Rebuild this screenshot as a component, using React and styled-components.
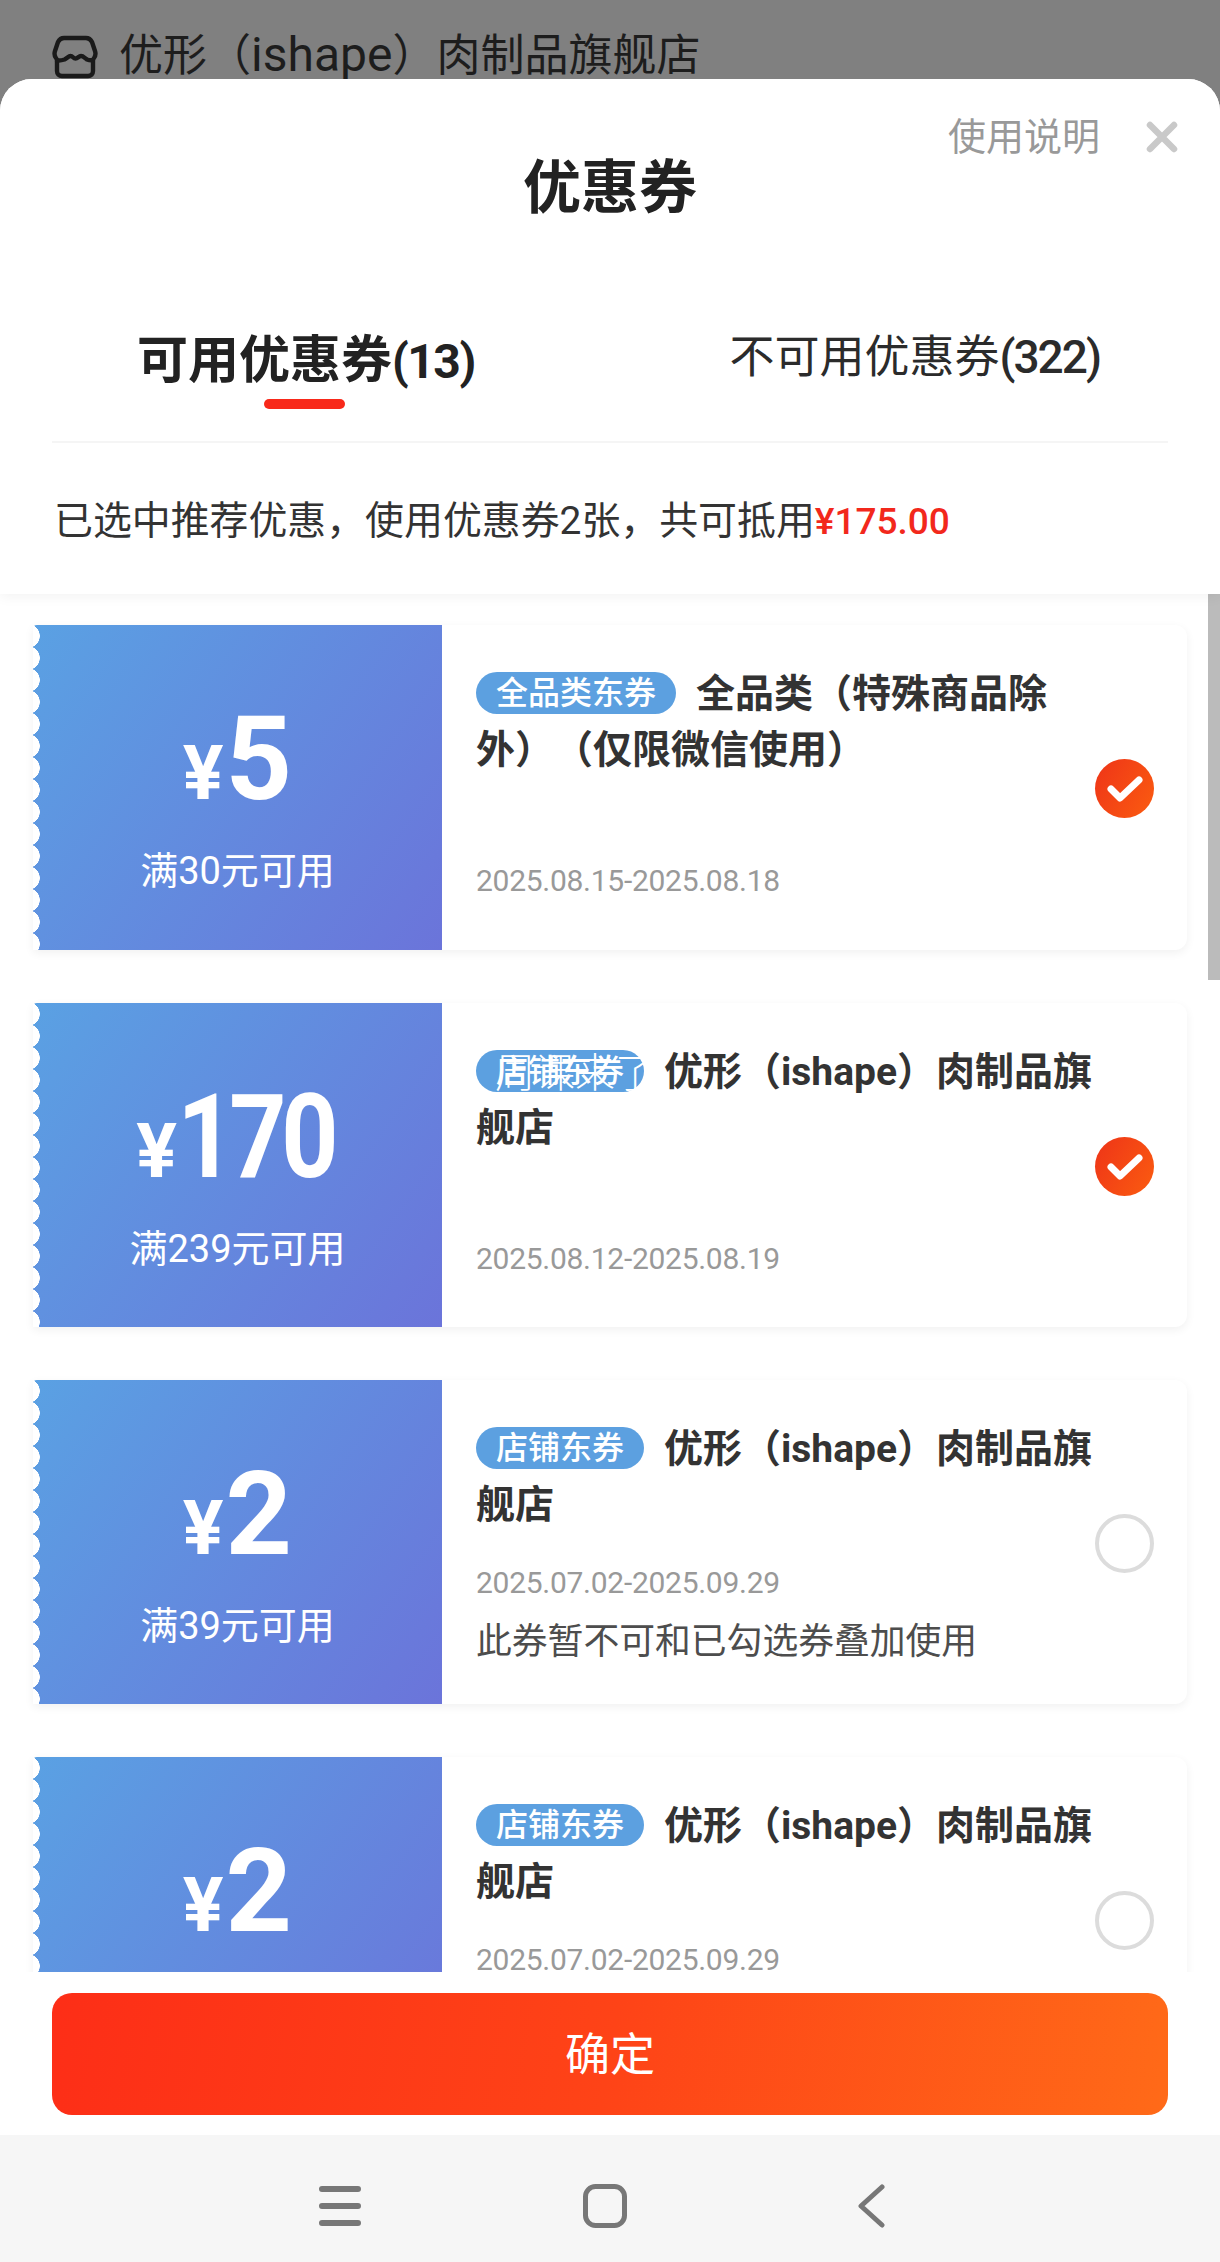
import React from "react";
import styled, { createGlobalStyle } from "styled-components";

const Global = createGlobalStyle`
  html, body { margin: 0; padding: 0; background: #f6f6f6; }
  * { box-sizing: border-box; }
  body { font-family: Roboto, "Noto Sans CJK SC", sans-serif; text-spacing-trim: space-all; }
`;

const Page = styled.div`
  width: 1220px; height: 2262px; display: flex; flex-direction: column;
  overflow: hidden; background: #808080;
`;
const ShopBar = styled.div`
  height: 79px; flex: none; display: flex; align-items: flex-start; gap: 21px;
  padding: 29px 0 0 52px; color: #1d1d1d; font-size: 44px; line-height: 52px; white-space: nowrap;
`;
const ShopLatin = styled.span`
  font-size: 48px; line-height: 52px;
`;
const Sheet = styled.div`
  flex: 1; min-height: 0; display: flex; flex-direction: column; background: #fff;
  border-radius: 32px 32px 0 0; overflow: hidden;
`;
const Header = styled.header`
  flex: none; height: 515px; background: #fff; position: relative; z-index: 2;
  box-shadow: 0 3px 12px rgba(0,0,0,.05); display: flex; flex-direction: column;
`;
const TitleArea = styled.div`
  display: grid; height: 211px; flex: none;
`;
const Title = styled.h1`
  grid-area: 1 / 1; margin: 72px 0 0; justify-self: center; font-size: 58px; line-height: 74px;
  font-weight: 700; color: #222;
`;
const Actions = styled.div`
  grid-area: 1 / 1; justify-self: end; align-self: start; display: flex; align-items: center;
  gap: 46px; padding: 31px 42px 0 0; color: #999; font-size: 38px; line-height: 54px;
`;
const Tabs = styled.div`
  flex: none; height: 153px; margin: 0 52px; padding: 0 68px 0 85px; display: flex;
  justify-content: space-between; border-bottom: 2px solid #f5f5f5;
`;
const Tab = styled.div`
  display: flex; flex-direction: column; align-items: center;
  padding-top: ${p => (p.$active ? 41 : 37)}px;
  font-size: ${p => (p.$active ? 51 : 45)}px; line-height: 60px;
  font-weight: ${p => (p.$active ? 700 : 400)}; color: ${p => (p.$active ? "#222" : "#2b2b2b")};
  white-space: nowrap;
`;
const TabCount = styled.span`
  font-size: ${p => (p.$active ? 48 : 46)}px; font-weight: ${p => (p.$active ? 700 : 500)};
  letter-spacing: ${p => (p.$active ? -1.5 : -2)}px;
`;
const TabLine = styled.span`
  width: 81px; height: 10px; margin-top: 7px; margin-right: 3px; border-radius: 5px; background: #f8291a;
`;
const Summary = styled.div`
  padding: 53px 0 0 54px; font-size: 38.9px; line-height: 50px; color: #333; white-space: nowrap;
`;
const Money = styled.span`
  color: #f2281c; font-weight: 500; font-size: 37px;
`;
const ListWrap = styled.div`
  flex: 1; min-height: 0; position: relative; overflow: hidden; background: #fff;
`;
const Scrollbar = styled.div`
  position: absolute; right: 0; top: 0; width: 12px; height: 386px; background: #bbb;
`;
const List = styled.div`
  display: flex; flex-direction: column; gap: 53px; padding: 31px 33px 0 33px;
`;
const Card = styled.article`
  flex: none; height: ${p => (p.$first ? 325 : 324)}px; display: flex; background: #fff; border-radius: 0 12px 12px 0;
  box-shadow: 0 3px 10px rgba(0,0,0,.06);
`;
const Ticket = styled.div`
  flex: none; width: 409px; position: relative; display: flex; flex-direction: column; align-items: center;
  padding-top: 78px; color: #fff;
  background: linear-gradient(125deg, #5aa1e3 0%, #6b74da 100%);
  border-radius: 4px 0 0 4px;
  &::before {
    content: ""; position: absolute; left: 0; top: 0; bottom: 0; width: 9px;
    background: radial-gradient(circle at -5px 50%, #fff 11.5px, transparent 12px) 0 0 / 9px 22px repeat-y;
  }
`;
const Price = styled.div`
  display: flex; align-items: baseline; line-height: 112px; font-weight: 700;
`;
const Yen = styled.span`
  font-size: 76px;
`;
const Amount = styled.span`
  display: inline-block; font-size: 116px;
  ${p => p.$tight
    ? "letter-spacing: -6px; padding-right: 6px; transform: scaleX(.86); margin: 0 -13px;"
    : "margin-left: 2px;"}
`;
const Limit = styled.div`
  margin-top: 17px; font-size: 38px; line-height: 50px; white-space: nowrap;
`;
const Body = styled.div`
  flex: 1; min-width: 0; padding: 41px 0 0 34px; display: flex; flex-direction: column; position: relative;
`;
const CardTitle = styled.div`
  width: 625px; height: 112px; flex: none; font-size: 39px; line-height: 56px; font-weight: 700; color: #333;
`;
const Tag = styled.span`
  display: inline-block; position: relative; height: 42px; line-height: 42px; padding: 0 20px; margin-right: 20px;
  border-radius: 21px; background: #5ca0e0; color: #fff; font-size: 32px; font-weight: 500; vertical-align: 3px;
`;
const Overlay = styled.span`
  position: absolute; left: 19px; top: -1px; font-size: 40px; line-height: 50px; font-weight: 300; color: #fff;
  white-space: nowrap;
`;
const Dates = styled.div`
  margin-top: ${p => (p.$compact ? 30 : 83)}px; font-size: 30px; line-height: 40px; color: #999;
  letter-spacing: -.28px; white-space: nowrap;
`;
const Note = styled.div`
  margin-top: 18px; font-size: 35.8px; line-height: 42px; color: #4d4d4d; white-space: nowrap;
`;
const Radio = styled.div`
  position: absolute; right: 33px; top: 134px; width: 59px; height: 59px; border-radius: 50%;
  display: flex; align-items: center; justify-content: center;
  ${p => p.$on
    ? "background: linear-gradient(120deg, #ee3418, #fb5c10);"
    : "border: 4px solid #dcdcdc; background: #fff;"}
`;
const Footer = styled.div`
  flex: none; height: 163px; padding: 21px 52px 20px; background: #fff; position: relative; z-index: 2;
`;
const Confirm = styled.button`
  width: 100%; height: 122px; border: 0; border-radius: 20px; color: #fff; font: 400 45px "Noto Sans CJK SC", sans-serif;
  padding: 0 0 6px;
  background: linear-gradient(100deg, #fd2e17 0%, #fe4317 50%, #ff6a18 100%);
`;
const NavBar = styled.nav`
  flex: none; height: 127px; background: #f6f6f6; display: flex; align-items: center;
  gap: 221px; padding: 15px 0 0 318px;
`;
const BackSlot = styled.span`
  display: flex; margin-left: 9px;
`;

const StoreIcon = () => (
  <svg width="46" height="44" viewBox="0 0 46 44" fill="none" stroke="#1a1a1a" strokeWidth="4.4" strokeLinejoin="round" style={{ marginTop: 6, flex: "none" }}>
    <path d="M12 3h22c3 0 5 2 6 4l3 9c1 3 .5 5-1 7-1 1-1 2-1 3v10c0 3-2 5-5 5H10c-3 0-5-2-5-5V26c0-1 0-2-1-3-1.500-2-2-4-1-7l3-9c1-2 3-4 6-4z" />
    <path d="M3.500 25c3 1 6 .5 9-.5 3-1.500 4-3.500 6-3.500 2.500 0 2.500 2.500 5 2.500s3-2.500 5.500-2.500 3.500 2 6 3.500c2.500 1 5 1 7.500 .5" />
  </svg>
);
const CloseIcon = () => (
  <svg width="32" height="32" viewBox="0 0 32 32" stroke="#c9c9c9" strokeWidth="6.500" strokeLinecap="round">
    <path d="M4 4l24 24M28 4L4 28" />
  </svg>
);
const CheckIcon = () => (
  <svg width="36" height="28" viewBox="0 0 36 28" fill="none" stroke="#fff" strokeWidth="7" strokeLinecap="round" strokeLinejoin="round">
    <path d="M4 14l9 9L32 5" />
  </svg>
);
const MenuIcon = () => (
  <svg width="44" height="40" viewBox="0 0 44 40" stroke="#777" strokeWidth="6" strokeLinecap="round">
    <path d="M4 3h36M4 20h36M4 37h36" />
  </svg>
);
const HomeIcon = () => (
  <svg width="44" height="44" viewBox="0 0 44 44" fill="none" stroke="#777" strokeWidth="5">
    <rect x="2.500" y="2.500" width="39" height="39" rx="10" />
  </svg>
);
const BackIcon = () => (
  <svg width="28" height="44" viewBox="0 0 28 44" fill="none" stroke="#777" strokeWidth="5" strokeLinecap="round" strokeLinejoin="round">
    <path d="M25 3L4 22l21 19" />
  </svg>
);

const shop = "优形（ishape）肉制品旗舰店";
const coupons = [
  { amount: "5", limit: "满30元可用", tag: "全品类东券", title: "全品类（特殊商品除外）（仅限微信使用）", dates: "2025.08.15-2025.08.18", on: true },
  { amount: "170", limit: "满239元可用", tag: "店铺东券", title: shop, dates: "2025.08.12-2025.08.19", on: true, overlay: "周课来了" },
  { amount: "2", limit: "满39元可用", tag: "店铺东券", title: shop, dates: "2025.07.02-2025.09.29", note: "此券暂不可和已勾选券叠加使用" },
  { amount: "2", limit: "满39元可用", tag: "店铺东券", title: shop, dates: "2025.07.02-2025.09.29", note: "此券暂不可和已勾选券叠加使用" },
];

export default function App() {
  return (
    <>
      <Global />
      <Page>
        <ShopBar><StoreIcon /><span>优形（<ShopLatin>ishape</ShopLatin>）肉制品旗舰店</span></ShopBar>
        <Sheet>
          <Header>
            <TitleArea>
              <Title>优惠券</Title>
              <Actions>使用说明<CloseIcon /></Actions>
            </TitleArea>
            <Tabs>
              <Tab $active><span>可用优惠券<TabCount $active>(13)</TabCount></span><TabLine /></Tab>
              <Tab><span>不可用优惠券<TabCount>(322)</TabCount></span></Tab>
            </Tabs>
            <Summary>已选中推荐优惠，使用优惠券2张，共可抵用<Money>¥175.00</Money></Summary>
          </Header>
          <ListWrap>
            <List>
              {coupons.map((c, i) => (
                <Card key={i} $first={i === 0}>
                  <Ticket>
                    <Price>
                      <Yen>¥</Yen>
                      <Amount $tight={c.amount.length > 1}>{c.amount}</Amount>
                    </Price>
                    <Limit>{c.limit}</Limit>
                  </Ticket>
                  <Body>
                    <CardTitle>
                      <Tag>{c.tag}{c.overlay && <Overlay>{c.overlay}</Overlay>}</Tag>
                      {c.title}
                    </CardTitle>
                    <Dates $compact={!!c.note}>{c.dates}</Dates>
                    {c.note && <Note>{c.note}</Note>}
                    <Radio $on={c.on}>{c.on && <CheckIcon />}</Radio>
                  </Body>
                </Card>
              ))}
            </List>
            <Scrollbar />
          </ListWrap>
          <Footer><Confirm>确定</Confirm></Footer>
        </Sheet>
        <NavBar><MenuIcon /><HomeIcon /><BackSlot><BackIcon /></BackSlot></NavBar>
      </Page>
    </>
  );
}
